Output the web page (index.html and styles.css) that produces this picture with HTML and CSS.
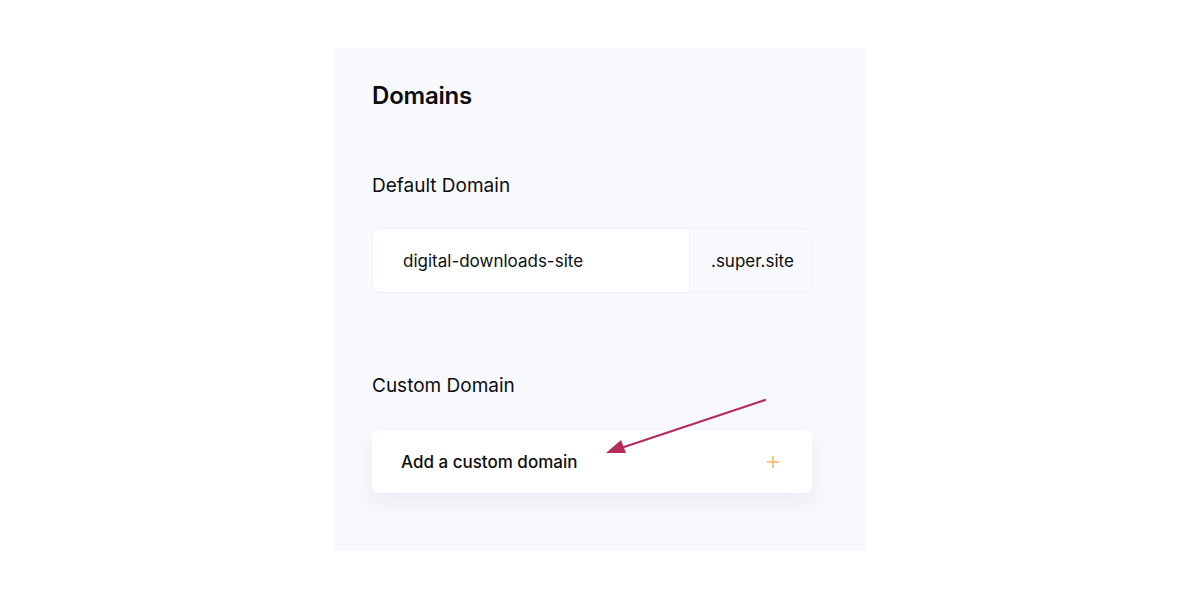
FILE: index.html
```html
<!DOCTYPE html>
<html lang="en">
<head>
    <meta charset="UTF-8">
    <title>Domains</title>
    <link rel="stylesheet" href="styles.css">
</head>
<body>
    <div class="panel">
        <h1 class="title">Domains</h1>

        <!-- Default domain -->
        <h2 class="label">Default Domain</h2>
        <div class="domain-field">
            <div class="subdomain">digital-downloads-site</div>
            <div class="suffix">.super.site</div>
        </div>

        <!-- Custom domain -->
        <h2 class="label custom-label">Custom Domain</h2>
        <div class="add-card">
            <span>Add a custom domain</span>
            <svg class="plus" width="14" height="14" viewBox="0 0 14 14">
                <path d="M7 1V13M1 7H13" stroke="#f5b860" stroke-width="1.6"/>
            </svg>
        </div>

        <svg class="arrow" width="180" height="70" viewBox="0 0 180 70">
            <line x1="165" y1="12" x2="18" y2="61" stroke="#b72b5c" stroke-width="2.2" stroke-linecap="round"/>
            <polygon points="6,65 21,52 26,65" fill="#b72b5c"/>
        </svg>
    </div>
</body>
</html>
```

FILE: styles.css
```css
body {
    margin: 0;
    background-color: #ffffff;
    font-family: Inter, "Noto Sans", sans-serif;
    color: #0d0d0d;
}
.panel {
    position: relative;
    width: 530px;
    height: 503px;
    box-sizing: border-box;
    margin: 48px 0 0 335px;
    padding: 33px 53px 0 37px;
    background-color: #f8f9fd;
}
.title {
    margin: 0;
    font-size: 24px;
    line-height: 30px;
    font-weight: 600;
    letter-spacing: -0.2px;
}
.label {
    margin: 0;
    font-size: 19px;
    line-height: 24px;
    font-weight: 400;
    margin-top: 63px;
}
.custom-label {
    margin-top: 81px;
}
.domain-field {
    display: flex;
    height: 65px;
    margin-top: 30px;
    border: 1px solid #eef0f5;
    border-radius: 8px;
    overflow: hidden;
    box-sizing: border-box;
    font-size: 17px;
}
.subdomain {
    flex: 1;
    display: flex;
    align-items: center;
    padding-left: 30px;
    background-color: #ffffff;
}
.suffix {
    display: flex;
    align-items: center;
    width: 122px;
    box-sizing: border-box;
    padding-left: 21px;
    background-color: #f8f9fd;
    border-left: 1px solid #eef0f5;
}
.add-card {
    display: flex;
    justify-content: space-between;
    align-items: center;
    height: 63px;
    margin-top: 32px;
    padding: 0 32px 0 29px;
    background-color: #ffffff;
    border-radius: 8px;
    box-shadow: 0 10px 18px rgba(200, 204, 225, 0.25);
    font-size: 17px;
    font-weight: 500;
}
.arrow {
    position: absolute;
    left: 265px;
    top: 340px;
}
```
